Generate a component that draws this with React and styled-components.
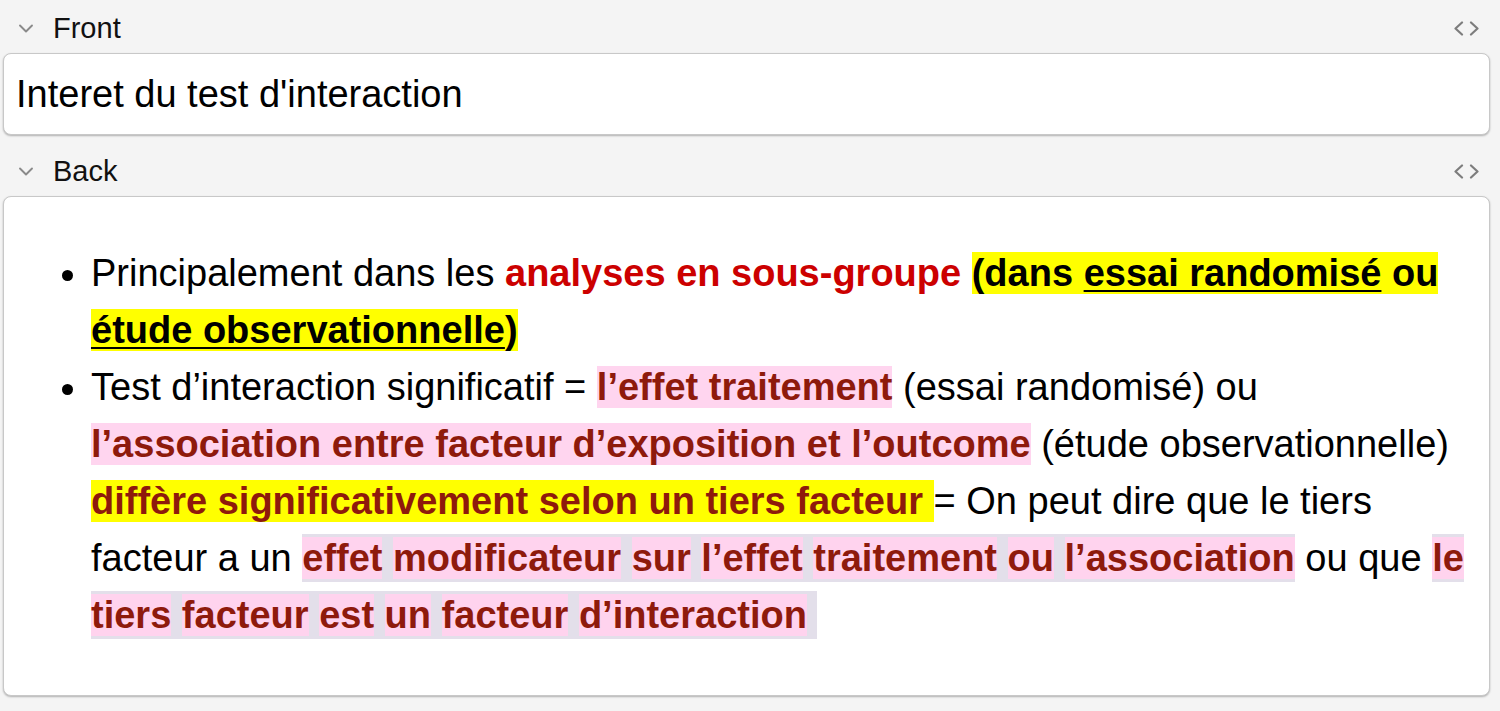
import styled, { createGlobalStyle } from "styled-components";

const GlobalStyle = createGlobalStyle`
  html, body {
    margin: 0;
    padding: 0;
    background: #f4f4f4;
  }
  body {
    font-family: "Liberation Sans", Arial, sans-serif;
    color: #000;
  }
`;

const Editor = styled.div`
  box-sizing: border-box;
  min-height: 711px;
  padding: 4px 10px 15px 3px;
  display: flex;
  flex-direction: column;
`;

const Field = styled.section`
  display: flex;
  flex-direction: column;
  flex: ${(p) => (p.$grow ? 1 : "none")};
  & + & {
    margin-top: 12px;
  }
`;

const FieldHeader = styled.div`
  height: 49px;
  display: flex;
  align-items: center;
  padding: 0 10px 0 14px;
`;

const Label = styled.span`
  margin-left: 18px;
  font-size: 29px;
  color: #111;
  flex: 1;
`;

const FieldBox = styled.div`
  box-sizing: border-box;
  background: #fff;
  border: 1px solid #c8c8c8;
  border-radius: 8px;
  box-shadow: 0 1px 2px rgba(0, 0, 0, 0.28);
  padding: ${(p) => (p.$rich ? "12px" : "12px 12px 11px")};
  font-size: 38px;
  line-height: 57px;
  flex: ${(p) => (p.$rich ? 1 : "none")};
`;

const List = styled.ul`
  margin: 36px 0;
  padding-left: 75px;
`;

const Red = styled.b`
  color: #cc0000;
`;

const Marked = styled.b`
  background: #ffff00;
  color: ${(p) => p.$color || "#000"};
`;

const Under = styled.u`
  text-decoration-thickness: 2px;
  text-underline-offset: 4px;
`;

const Pink = styled.b`
  background: #ffd5ef;
  color: #8e1a0c;
`;

const Lavender = styled.b`
  background: #e3dfea;
  padding: 3px 0;
  color: #8e1a0c;
`;

const Word = styled.span`
  background: #ffd3ee;
`;

function Chevron() {
  return (
    <svg width="18" height="11" viewBox="0 0 18 11">
      <path d="M3 2.5 L9 8.5 L15 2.5" fill="none" stroke="#8a8a8a" strokeWidth="1.9" strokeLinecap="round" strokeLinejoin="round" />
    </svg>
  );
}

function CodeIcon() {
  return (
    <svg width="27" height="15" viewBox="0 0 27 15">
      <path d="M9 1.5 L2.5 7.5 L9 13.5 M18 1.5 L24.5 7.5 L18 13.5" fill="none" stroke="#7d7d7d" strokeWidth="2.2" strokeLinecap="round" strokeLinejoin="round" />
    </svg>
  );
}

function Patchy({ text }) {
  const parts = text.split(/(\s+)/);
  return (
    <Lavender>
      {parts.map((p, i) => (p.trim() ? <Word key={i}>{p}</Word> : p))}
    </Lavender>
  );
}

function FieldHead({ name }) {
  return (
    <FieldHeader>
      <Chevron />
      <Label>{name}</Label>
      <CodeIcon />
    </FieldHeader>
  );
}

export default function App() {
  return (
    <>
      <GlobalStyle />
      <Editor>
        <Field>
          <FieldHead name="Front" />
          <FieldBox>Interet du test d'interaction</FieldBox>
        </Field>
        <Field $grow>
          <FieldHead name="Back" />
          <FieldBox $rich>
            <List>
              <li>
                Principalement dans les <Red>analyses en sous-groupe</Red>{" "}
                <Marked>
                  (dans <Under>essai randomisé</Under> ou <Under>étude observationnelle</Under>)
                </Marked>
              </li>
              <li>
                Test d’interaction significatif = <Pink>l’effet traitement</Pink> (essai randomisé) ou{" "}
                <Pink>l’association entre facteur d’exposition et l’outcome</Pink> (étude observationnelle){" "}
                <Marked $color="#8e1a0c">diffère significativement selon un tiers facteur </Marked>= On peut dire que le tiers
                facteur a un <Patchy text="effet modificateur sur l’effet traitement ou l’association" /> ou que{" "}
                <Patchy text={"le tiers facteur est un facteur d’interaction\u00a0"} />
              </li>
            </List>
          </FieldBox>
        </Field>
      </Editor>
    </>
  );
}
